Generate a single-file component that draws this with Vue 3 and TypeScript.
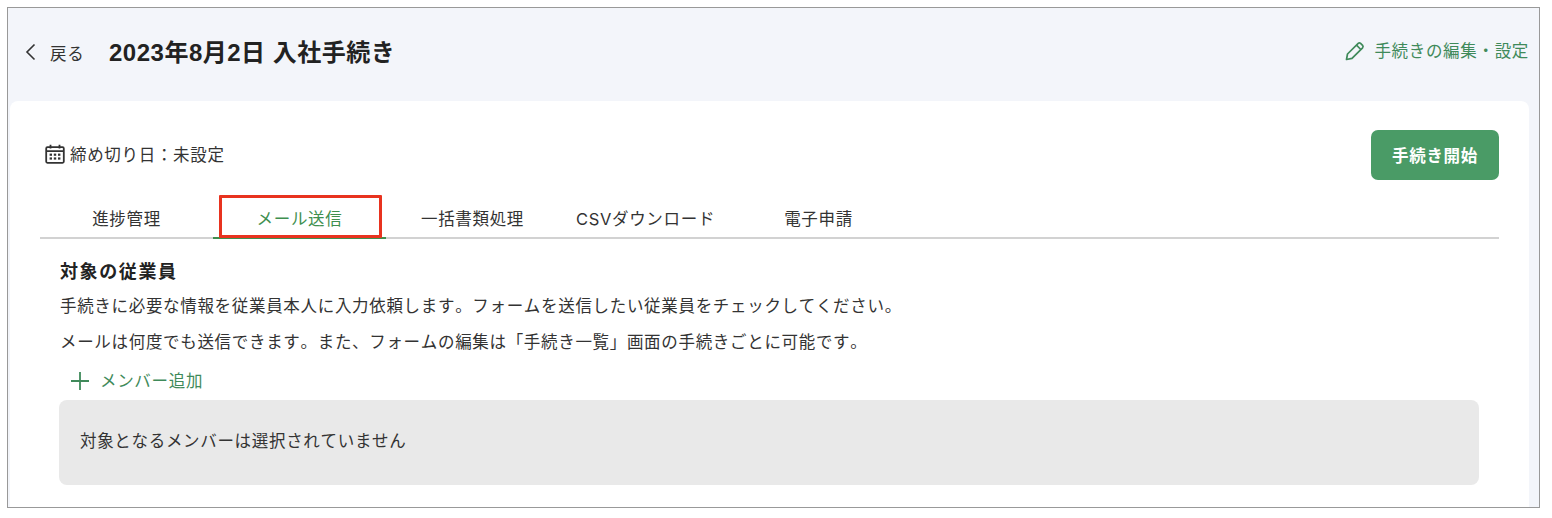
<script setup lang="ts">
const tabs: string[] = ['進捗管理', 'メール送信', '一括書類処理', 'CSVダウンロード', '電子申請']
const active = 1
</script>

<template>
  <div class="page">
    <div class="frame">
      <header class="head">
        <a class="back">
          <svg class="chev" width="12" height="18" viewBox="0 0 12 18" fill="none"><path d="M10.5 1.5 L3 9 L10.5 16.5" stroke="#333" stroke-width="1.6" /></svg>
          <span class="back-label">戻る</span>
        </a>
        <h1 class="title">2023年8月2日 入社手続き</h1>
        <a class="edit">
          <svg class="pencil" width="20" height="20" viewBox="0 0 20 20" fill="none" stroke="#3f8a5a" stroke-width="1.7" stroke-linejoin="round"><path d="M1.5 18.5 L2.5 13 L13.2 2.4 Q14.4 1.4 15.6 2.4 L17.6 4.4 Q18.6 5.6 17.6 6.8 L7 17.4 Z" /><path d="M11.5 4.2 L15.8 8.5" /></svg>
          <span>手続きの編集・設定</span>
        </a>
      </header>
      <main class="card">
        <div class="toprow">
          <div class="deadline">
            <svg width="20" height="20" viewBox="0 0 20 20" fill="none" stroke="#333" stroke-width="1.8"><rect x="1.2" y="3.2" width="17.6" height="15.6" rx="1.2" /><path d="M1.2 7.2 H18.8 M5.5 0.8 V4.4 M14.5 0.8 V4.4" /><g fill="#333" stroke="none"><rect x="4.6" y="9.6" width="2.4" height="2.2" /><rect x="8.8" y="9.6" width="2.4" height="2.2" /><rect x="13" y="9.6" width="2.4" height="2.2" /><rect x="4.6" y="13.4" width="2.4" height="2.2" /><rect x="8.8" y="13.4" width="2.4" height="2.2" /><rect x="13" y="13.4" width="2.4" height="2.2" /></g></svg>
            <span>締め切り日：未設定</span>
          </div>
          <button class="start">手続き開始</button>
        </div>
        <nav class="tabs">
          <div v-for="(t, i) in tabs" :key="t" class="tab" :class="{ on: i === active }">{{ t }}<span v-if="i === active" class="mark"></span></div>
        </nav>
        <section class="body">
          <h2 class="sub">対象の従業員</h2>
          <p class="line first">手続きに必要な情報を従業員本人に入力依頼します。フォームを送信したい従業員をチェックしてください。</p>
          <p class="line second">メールは何度でも送信できます。また、フォームの編集は「手続き一覧」画面の手続きごとに可能です。</p>
          <a class="add">
            <svg width="20" height="20" viewBox="0 0 20 20" stroke="#3f8a5a" stroke-width="1.8"><path d="M10 1 V19 M1 10 H19" /></svg>
            <span>メンバー追加</span>
          </a>
          <div class="empty">対象となるメンバーは選択されていません</div>
        </section>
      </main>
    </div>
  </div>
</template>

<style>
html, body { margin: 0; background: #fff; }
</style>

<style scoped>
.page {
  width: 1552px;
  height: 518px;
  padding: 7px 0 0 7px;
  box-sizing: border-box;
  font-family: "Inter", "Noto Sans CJK JP", sans-serif;
  color: #333;
  font-kerning: none;
  font-size: 16.5px;
  letter-spacing: 0.68px;
}
.frame {
  width: 1533px;
  height: 501px;
  box-sizing: border-box;
  border: 1px solid #999;
  background: #f3f5fa;
  padding-left: 2px;
  overflow: hidden;
}
.head {
  height: 93px;
  display: flex;
  align-items: center;
  padding: 0 10px 0 12px;
}
.back { display: flex; align-items: center; gap: 14px; width: 87px; flex: none; }
.back-label { margin-bottom: 3px; }
.chev { margin: 0 0 5px 2px; }
.title { margin: 0 0 4px; font-family: "Liberation Sans", "Noto Sans CJK JP", sans-serif; font-size: 24px; font-weight: 700; color: #222; line-height: 1; letter-spacing: 0.5px; }
.edit { margin-left: auto; display: flex; align-items: center; gap: 9px; color: #3f8a5a; padding-bottom: 10px; }
.pencil { margin-top: 3px; }
.card {
  width: 1519px;
  height: 420px;
  box-sizing: border-box;
  background: #fff;
  border-radius: 8px;
  padding: 29px 30px 0;
}
.toprow { display: flex; justify-content: space-between; align-items: center; padding-left: 5px; height: 50px; }
.deadline { display: flex; align-items: center; gap: 5px; padding-bottom: 2px; }
.start {
  width: 128px;
  height: 50px;
  border: 0;
  border-radius: 7px;
  background: #4a9b66;
  color: #fff;
  font: 700 16.5px "Inter", "Noto Sans CJK JP", sans-serif;
  letter-spacing: 0.7px;
}
.tabs {
  display: flex;
  height: 59px;
  box-sizing: border-box;
  border-bottom: 2px solid #d2d2d2;
}
.tab {
  position: relative;
  width: 173px;
  box-sizing: border-box;
  text-align: center;
  padding-top: 29px;
  line-height: 20px;
}
.tab.on { color: #3f8f4f; }
.mark { position: absolute; left: 0; right: 0; bottom: -2px; height: 2px; background: #3f8f4f; }
.tab.on::after {
  content: "";
  position: absolute;
  left: 6px;
  right: 4px;
  top: 15px;
  bottom: -1px;
  border: 3px solid #e8331f;
  border-radius: 1px;
}
.body { padding: 0 20px 0; }
.sub { margin: 21px 0 0; font-size: 18px; font-weight: 700; color: #222; line-height: 24px; letter-spacing: 1.6px; }
.line { margin: 0; line-height: 22px; }
.first { margin-top: 11px; }
.second { margin-top: 14px; }
.add { display: flex; align-items: center; gap: 10px; margin: 17px 0 0 10px; color: #3f8a5a; line-height: 22px; height: 22px; }
.empty {
  margin: 8px 0 0 -1px;
  height: 85px;
  box-sizing: border-box;
  border-radius: 8px;
  background: #e9e9e9;
  display: flex;
  align-items: center;
  padding: 0 0 5px 21px;
}
</style>
